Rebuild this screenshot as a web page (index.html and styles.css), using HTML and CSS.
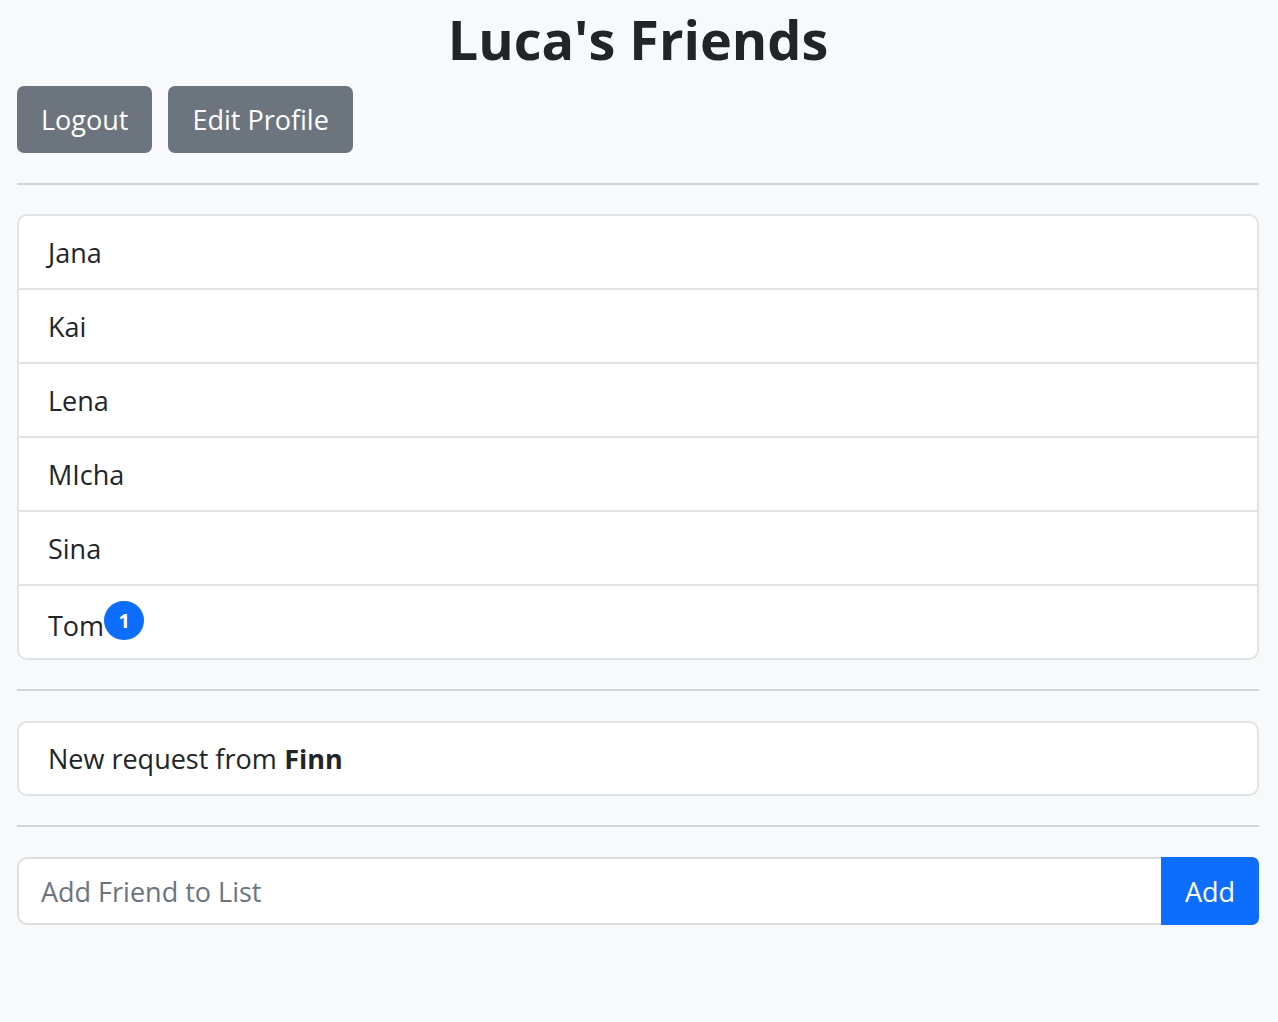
FILE: index.html
```html
<!DOCTYPE html>
<html lang="en">
<head>
<meta charset="utf-8">
<title>Luca's Friends</title>
<link rel="stylesheet" href="styles.css">
</head>
<body>
<div class="container">
  <h1 class="title">Luca's Friends</h1>
  <div class="actions">
    <button class="btn btn-secondary">Logout</button>
    <button class="btn btn-secondary">Edit Profile</button>
  </div>
  <hr class="divider">
  <ul class="list">
    <li class="list-item">Jana</li>
    <li class="list-item">Kai</li>
    <li class="list-item">Lena</li>
    <li class="list-item">MIcha</li>
    <li class="list-item">Sina</li>
    <li class="list-item"><span class="name">Tom</span><span class="badge">1</span></li>
  </ul>
  <hr class="divider divider-tight">
  <div class="list single">
    <div class="list-item">New request from <strong>Finn</strong></div>
  </div>
  <hr class="divider divider-tight">
  <form class="input-group" onsubmit="return false">
    <input class="input" type="text" placeholder="Add Friend to List">
    <button class="btn btn-primary" type="submit">Add</button>
  </form>
</div>
</body>
</html>
```

FILE: styles.css
```css
* { box-sizing: border-box; }

html, body {
  margin: 0;
  padding: 0;
  background: #f8f9fa;
  color: #212529;
  font-family: "Open Sans", "Noto Sans", "Liberation Sans", sans-serif;
}

.container {
  padding: 0 19px 0 17px;
}

.title {
  margin: 0 0 8px;
  font-size: 54px;
  line-height: 78px;
  font-weight: 700;
  text-align: center;
}

.actions {
  display: flex;
  gap: 16px;
}

.btn {
  font-family: inherit;
  font-size: 27px;
  border: 0;
  cursor: pointer;
  padding: 0 24px;
  height: 67px;
  border-radius: 7px;
  color: #fff;
}

.btn-secondary {
  background: #6c757d;
}

.btn-primary {
  background: #0d6efd;
}

.divider {
  border: 0;
  border-top: 2px solid #d3d5d8;
  margin: 30px 0 29px;
}

.divider-tight {
  margin: 29px 0 30px;
}

.list {
  list-style: none;
  margin: 0;
  padding: 0;
  background: #fff;
  border: 2px solid #e1e4e7;
  border-radius: 10px;
}

.list-item {
  box-sizing: content-box;
  height: 72px;
  display: flex;
  align-items: center;
  padding: 0 29px;
  font-size: 27px;
  border-top: 2px solid #e1e4e7;
}

.list-item:first-child {
  border-top: 0;
}

.single .list-item {
  height: 71px;
}

.list-item strong {
  font-weight: 700;
  margin-left: 0.28em;
}

.name {
  position: relative;
  top: 3px;
}

.badge {
  display: inline-flex;
  align-items: center;
  justify-content: center;
  width: 40px;
  height: 39px;
  border-radius: 20px;
  background: #0d6efd;
  color: #fff;
  font-size: 20px;
  font-weight: 700;
  position: relative;
  top: -2px;
}

.input-group {
  display: flex;
  margin: 0;
}

.input {
  flex: 1;
  height: 68px;
  font-family: inherit;
  font-size: 27px;
  color: #212529;
  background: #fff;
  border: 2px solid #dcdfe2;
  border-right: 0;
  border-radius: 10px 0 0 10px;
  padding: 0 22px;
  outline: none;
}

.input::placeholder {
  color: #6c757d;
}

.input-group .btn {
  height: 68px;
  width: 98px;
  padding: 0;
  border-radius: 0 7px 7px 0;
}
```
